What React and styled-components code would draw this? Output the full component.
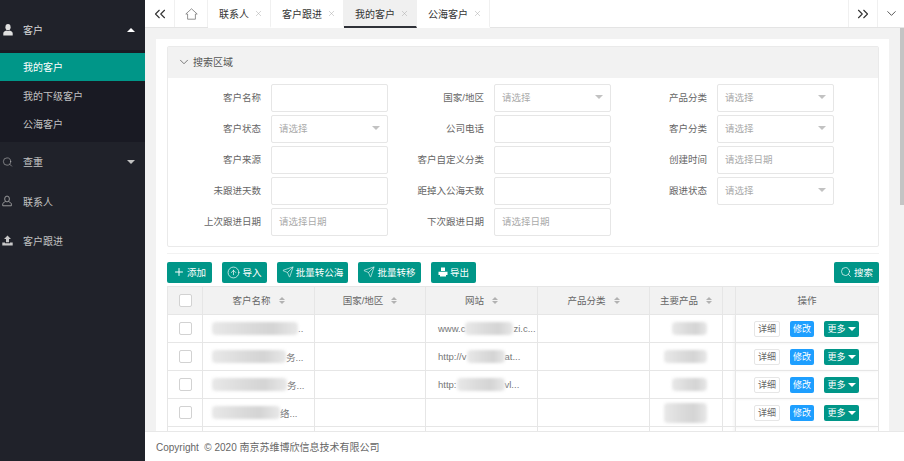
import { createGlobalStyle, styled } from 'styled-components'
import {
  ChevronDown,
  ChevronsLeft,
  ChevronsRight,
  CircleArrowUp,
  Plus,
  Search,
  Send,
  X,
} from 'lucide-react'

const GlobalStyle = createGlobalStyle`
  html, body {
    margin: 0;
    height: 100%;
    overflow: hidden;
    background: #fff;
  }
  body {
    font-family: "Liberation Sans", "Noto Sans CJK SC", sans-serif;
    font-size: 9.5px;
    color: #666;
  }
  #root { height: 100%; }
  * { box-sizing: border-box; }
`

const Layout = styled.div`
  display: flex;
  height: 461px;
  width: 904px;
`

const Sidebar = styled.aside`
  width: 145px;
  flex: none;
  padding-top: 10px;
  background: #20222a;
  color: #c2c2c2;
`

const NavItem = styled.div`
  height: 39.5px;
  display: flex;
  align-items: center;
  padding: 0 10px 0 2px;
  color: ${(p) => (p.$open ? '#d8d8d8' : '#c2c2c2')};
  font-size: 10px;
`

const NavIcon = styled.span`
  width: 11px;
  height: 12px;
  display: flex;
  align-items: center;
  justify-content: center;
  margin-right: 10px;
`

const NavLabel = styled.span`
  flex: 1;
`

const Caret = styled.i`
  width: 0;
  height: 0;
  border-left: 4px solid transparent;
  border-right: 4px solid transparent;
  ${(p) =>
    p.$up
      ? `border-bottom: 4px solid ${p.$color};`
      : `border-top: 4px solid ${p.$color};`}
`

const SubMenu = styled.div`
  background: #191a23;
  padding: 3px 0 4px;
`

const SubItem = styled.div`
  height: 28.5px;
  display: flex;
  align-items: center;
  padding-left: 23px;
  font-size: 10px;
  color: ${(p) => (p.$active ? '#fff' : '#c2c2c2')};
  background: ${(p) => (p.$active ? '#009688' : 'transparent')};
`

const Content = styled.div`
  flex: 1;
  min-width: 0;
  display: flex;
  flex-direction: column;
  position: relative;
`

const TabBar = styled.div`
  height: 28px;
  flex: none;
  display: flex;
  background: #fff;
  border-bottom: 1px solid #e4e4e4;
`

const TabIcon = styled.div`
  width: ${(p) => p.$w}px;
  flex: none;
  display: flex;
  align-items: center;
  justify-content: center;
  color: #333;
  border-right: ${(p) => (p.$noBorder ? 'none' : '1px solid #f0f0f0')};
  border-left: ${(p) => (p.$left ? '1px solid #f0f0f0' : 'none')};
`

const Tab = styled.div`
  display: flex;
  align-items: center;
  padding: 0 7px 0 11px;
  width: ${(p) => p.$w}px;
  height: 28px;
  font-size: 10px;
  color: #333;
  border-right: 1px solid #f0f0f0;
  background: ${(p) => (p.$active ? '#f0f0f0' : '#fff')};
  border-bottom: 2px solid ${(p) => (p.$active ? '#2f3138' : 'transparent')};
`

const TabClose = styled.span`
  display: flex;
  margin-left: 5px;
  color: #a8a8a8;
`

const Spacer = styled.div`
  flex: 1;
`

const Body = styled.main`
  flex: 1;
  min-height: 0;
  overflow: hidden;
  background: #f2f2f2;
  padding: 11px 15px 0 11px;
`

const Scrollbar = styled.div`
  position: absolute;
  top: 28px;
  right: 0;
  width: 4px;
  height: 177px;
  background: #c4c4c4;
`

const Card = styled.div`
  background: #fff;
  padding: 7px 10px 0 11px;
  height: 100%;
  overflow: hidden;
`

const Panel = styled.section`
  border: 1px solid #eaeaea;
  border-radius: 2px;
  height: 201px;
`

const PanelHead = styled.div`
  height: 31px;
  display: flex;
  align-items: center;
  padding: 0 0 2px 9px;
  gap: 2px;
  background: #f2f2f2;
  font-size: 10px;
  color: #555;
`

const FormGrid = styled.div`
  display: grid;
  grid-template-columns: 103px 117px 106px 117px 106px 117px;
  grid-auto-rows: 28px;
  row-gap: 3px;
  padding-top: 6px;
`

const FieldLabel = styled.label`
  display: flex;
  align-items: center;
  justify-content: flex-end;
  padding: 0 10px 2px 0;
  white-space: nowrap;
  color: #666;
`

const Field = styled.div`
  display: flex;
  align-items: center;
  justify-content: space-between;
  padding: 0 7px 2px 7px;
  border: 1px solid #e6e6e6;
  border-radius: 2px;
  background: #fff;
  color: #aaa;
`

const Divider = styled.div`
  height: 1px;
  margin-top: 6px;
  background: #f2f2f2;
`

const Toolbar = styled.div`
  display: flex;
  gap: 10px;
  margin-top: 8px;
  height: 21px;
`

const ActionButton = styled.button`
  width: ${(p) => p.$w}px;
  height: 21px;
  display: flex;
  align-items: center;
  justify-content: center;
  gap: 2px;
  padding: 0 0 1px;
  border: none;
  border-radius: 2px;
  background: #009688;
  color: #fff;
  font: inherit;
  font-size: 9.5px;
  margin-left: ${(p) => (p.$push ? 'auto' : '0')};
`

const Table = styled.table`
  width: 711px;
  margin-top: 3px;
  table-layout: fixed;
  border-collapse: collapse;
  border: 1px solid #e6e6e6;
`

const Th = styled.th`
  height: 28px;
  padding: 0 0 1px;
  background: #f2f2f2;
  border: 1px solid #e6e6e6;
  font-weight: 400;
  color: #666;
`

const Td = styled.td`
  height: 28px;
  padding: 0;
  border: 1px solid #e6e6e6;
  box-shadow: ${(p) => (p.$fixed ? '-2px 0 3px rgba(0, 0, 0, 0.06)' : 'none')};
`

const HeadInner = styled.div`
  display: flex;
  align-items: center;
  justify-content: center;
  gap: 8px;
`

const Sort = styled.span`
  display: flex;
  flex-direction: column;
  gap: 1px;
`

const SortArrow = styled.i`
  width: 0;
  height: 0;
  border-left: 3.5px solid transparent;
  border-right: 3.5px solid transparent;
  ${(p) => (p.$up ? 'border-bottom: 3.5px solid #b2b2b2;' : 'border-top: 3.5px solid #b2b2b2;')}
`

const CheckCell = styled.div`
  display: flex;
  justify-content: center;
`

const Check = styled.span`
  width: 13px;
  height: 13px;
  background: #fff;
  border: 1px solid #d2d2d2;
  border-radius: 2px;
`

const CellText = styled.div`
  display: flex;
  align-items: center;
  justify-content: ${(p) => p.$align || 'flex-start'};
  padding-left: ${(p) => p.$pad || 0}px;
  padding-right: ${(p) => p.$right || 0}px;
  white-space: nowrap;
  color: #777;
`

const Blur = styled.span`
  width: ${(p) => p.$w}px;
  height: ${(p) => p.$h || 13}px;
  flex: none;
  background: linear-gradient(90deg, #e8e8e8, #dadada 45%, #d4d4d4 70%, #e8e8e8);
  border-radius: 4px;
  filter: blur(1.5px);
`

const Ops = styled.div`
  display: flex;
  justify-content: center;
  align-items: center;
  gap: 10px;
  padding-right: 1px;
`

const OpButton = styled.button`
  width: ${(p) => p.$w}px;
  height: 16px;
  display: flex;
  align-items: center;
  justify-content: center;
  gap: 2px;
  padding: 0;
  font: inherit;
  font-size: 9px;
  border-radius: 2px;
  border: ${(p) => (p.$kind === 'plain' ? '1px solid #e6e6e6' : 'none')};
  color: ${(p) => (p.$kind === 'plain' ? '#666' : '#fff')};
  background: ${(p) =>
    p.$kind === 'plain' ? '#fff' : p.$kind === 'blue' ? '#1e9fff' : '#009688'};
`

const Footer = styled.footer`
  height: 30px;
  flex: none;
  display: flex;
  align-items: center;
  padding-left: 11px;
  background: #fff;
  border-top: 1px solid #e8e8e8;
  font-size: 10px;
  color: #666;
`

const UserSolid = () => (
  <svg width="10" height="12" viewBox="0 0 10 12" fill="#e0e0e0">
    <ellipse cx="5" cy="3.2" rx="2.6" ry="3.1" />
    <path d="M0.3 11.5V9.2C0.3 7.6 2 7 3.2 6.4C4.3 7.2 5.7 7.2 6.8 6.4C8 7 9.7 7.6 9.7 9.2V11.5Z" />
  </svg>
)

const UserOutline = () => (
  <svg width="12" height="12" viewBox="0 0 12 12" fill="none" stroke="#b0b0b0" strokeWidth="0.9">
    <ellipse cx="5.5" cy="3.8" rx="2.6" ry="3.2" />
    <path d="M3.8 6.6C2.4 7.4 0.8 8 0.8 9.4V11.2H10.2V9.4C10.2 8 8.6 7.4 7.2 6.6" />
  </svg>
)

const UploadSolid = () => (
  <svg width="11" height="11" viewBox="0 0 11 11" fill="#c8c8c8">
    <path d="M5.5 0.5L9 4H7V7.2H4V4H2Z" />
    <path d="M0.3 7.5H3V8.2H8V7.5H10.7V10.5H0.3Z" />
  </svg>
)

const HomeIcon = () => (
  <svg width="13" height="12" viewBox="0 0 13 12" fill="none" stroke="#777" strokeWidth="0.8">
    <path d="M0.8 6L6.5 0.8L12.2 6H10.4V11.2H2.6V6Z" />
  </svg>
)

const ExportIcon = () => (
  <svg width="10" height="10" viewBox="0 0 10 10" fill="#fff">
    <path d="M3 0.5H7V4H3Z" />
    <path d="M0.5 4.8H9.5V8H8V9.5H2V8H0.5Z" />
  </svg>
)

const tabs = [
  { label: '联系人', width: 63 },
  { label: '客户跟进', width: 73 },
  { label: '我的客户', width: 73, active: true },
  { label: '公海客户', width: 73 },
]

const formFields = [
  ['客户名称', 'input'],
  ['国家/地区', 'select'],
  ['产品分类', 'select'],
  ['客户状态', 'select'],
  ['公司电话', 'input'],
  ['客户分类', 'select'],
  ['客户来源', 'input'],
  ['客户自定义分类', 'input'],
  ['创建时间', 'date'],
  ['未跟进天数', 'input'],
  ['距掉入公海天数', 'input'],
  ['跟进状态', 'select'],
  ['上次跟进日期', 'date'],
  ['下次跟进日期', 'date'],
]

const columns = [
  { label: '客户名称', width: 112, sort: true },
  { label: '国家/地区', width: 111, sort: true },
  { label: '网站', width: 112, sort: true },
  { label: '产品分类', width: 112, sort: true },
  { label: '主要产品', width: 73, sort: true },
  { label: '', width: 13 },
  { label: '操作', width: 143 },
]

const rows = [
  { name: [86, '..'], site: ['www.c', 48, 'zi.c...'], product: [35, 13] },
  { name: [74, '务...'], site: ['http://v', 38, 'at...'], product: [43, 13] },
  { name: [75, '务...'], site: ['http:', 48, 'vl...'], product: [35, 13] },
  { name: [68, '络...'], product: [43, 20] },
  {},
]

const FormPair = ({ label, type }) => (
  <>
    <FieldLabel>{label}</FieldLabel>
    <Field>
      {type === 'select' && '请选择'}
      {type === 'date' && '请选择日期'}
      {type === 'select' && <Caret $color="#c2c2c2" />}
    </Field>
  </>
)

export default function App() {
  return (
    <Layout>
      <GlobalStyle />
      <Sidebar>
        <NavItem $open>
          <NavIcon><UserSolid /></NavIcon>
          <NavLabel>客户</NavLabel>
          <Caret $up $color="#fff" />
        </NavItem>
        <SubMenu>
          <SubItem $active>我的客户</SubItem>
          <SubItem>我的下级客户</SubItem>
          <SubItem>公海客户</SubItem>
        </SubMenu>
        <NavItem>
          <NavIcon><Search size={14} strokeWidth={1.3} color="#b8b8b8" /></NavIcon>
          <NavLabel>查重</NavLabel>
          <Caret $color="#c2c2c2" />
        </NavItem>
        <NavItem>
          <NavIcon><UserOutline /></NavIcon>
          <NavLabel>联系人</NavLabel>
        </NavItem>
        <NavItem>
          <NavIcon><UploadSolid /></NavIcon>
          <NavLabel>客户跟进</NavLabel>
        </NavItem>
      </Sidebar>

      <Content>
        <TabBar>
          <TabIcon $w={30}><ChevronsLeft size={18} strokeWidth={1.5} /></TabIcon>
          <TabIcon $w={33}><HomeIcon /></TabIcon>
          {tabs.map((t) => (
            <Tab key={t.label} $active={t.active} $w={t.width}>
              {t.label}
              <TabClose><X size={9} strokeWidth={1.3} /></TabClose>
            </Tab>
          ))}
          <Spacer />
          <TabIcon $w={29} $left $noBorder><ChevronsRight size={18} strokeWidth={1.5} /></TabIcon>
          <TabIcon $w={27} $left $noBorder><ChevronDown size={15} strokeWidth={1.3} /></TabIcon>
        </TabBar>

        <Body>
          <Card>
            <Panel>
              <PanelHead>
                <ChevronDown size={14} strokeWidth={1.3} />
                搜索区域
              </PanelHead>
              <FormGrid>
                {formFields.map(([label, type]) => (
                  <FormPair key={label} label={label} type={type} />
                ))}
              </FormGrid>
            </Panel>
            <Divider />
            <Toolbar>
              <ActionButton $w={45}><Plus size={12} strokeWidth={2} />添加</ActionButton>
              <ActionButton $w={45}><CircleArrowUp size={13} strokeWidth={1.3} />导入</ActionButton>
              <ActionButton $w={71}><Send size={12} strokeWidth={1.2} />批量转公海</ActionButton>
              <ActionButton $w={63}><Send size={12} strokeWidth={1.2} />批量转移</ActionButton>
              <ActionButton $w={45}><ExportIcon />导出</ActionButton>
              <ActionButton $w={45} $push><Search size={12} strokeWidth={1.4} />搜索</ActionButton>
            </Toolbar>
            <Table>
              <colgroup>
                <col style={{ width: 35 }} />
                {columns.map((c, i) => <col key={i} style={{ width: c.width }} />)}
              </colgroup>
              <thead>
                <tr>
                  <Th><CheckCell><Check /></CheckCell></Th>
                  {columns.map((c, i) => (
                    <Th key={i}>
                      <HeadInner>
                        {c.label}
                        {c.sort && (
                          <Sort>
                            <SortArrow $up />
                            <SortArrow />
                          </Sort>
                        )}
                      </HeadInner>
                    </Th>
                  ))}
                </tr>
              </thead>
              <tbody>
                {rows.map((r, i) => (
                  <tr key={i}>
                    <Td>{r.name && <CheckCell><Check /></CheckCell>}</Td>
                    <Td>
                      {r.name && (
                        <CellText $pad={9}>
                          <Blur $w={r.name[0]} />
                          {r.name[1]}
                        </CellText>
                      )}
                    </Td>
                    <Td />
                    <Td>
                      {r.site && (
                        <CellText $pad={12}>
                          {r.site[0]}
                          <Blur $w={r.site[1]} />
                          {r.site[2]}
                        </CellText>
                      )}
                    </Td>
                    <Td />
                    <Td>
                      {r.product && (
                        <CellText $align="flex-end" $right={15}>
                          <Blur $w={r.product[0]} $h={r.product[1]} />
                        </CellText>
                      )}
                    </Td>
                    <Td />
                    <Td $fixed>
                      {r.name && (
                        <Ops>
                          <OpButton $kind="plain" $w={26}>详细</OpButton>
                          <OpButton $kind="blue" $w={24}>修改</OpButton>
                          <OpButton $kind="green" $w={35}>
                            更多
                            <Caret $color="#fff" />
                          </OpButton>
                        </Ops>
                      )}
                    </Td>
                  </tr>
                ))}
              </tbody>
            </Table>
          </Card>
        </Body>

        <Footer>Copyright&nbsp; © 2020 南京苏维博欣信息技术有限公司</Footer>
        <Scrollbar />
      </Content>
    </Layout>
  )
}
